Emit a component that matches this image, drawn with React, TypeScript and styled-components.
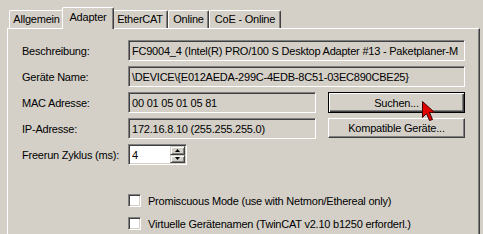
import React from "react";
import styled, { createGlobalStyle } from "styled-components";

const GlobalStyle = createGlobalStyle`
  html, body { margin: 0; padding: 0; background: #d4d0c8; }
  body {
    font-family: "Liberation Sans", Arial, sans-serif;
    font-size: 11px;
    letter-spacing: -0.22px;
    color: #000;
  }
`;

const Window = styled.div`
  position: relative;
  width: 483px;
  height: 234px;
  overflow: hidden;
  background: #d4d0c8;
`;

const TabStrip = styled.div`
  display: flex;
  align-items: flex-end;
  height: 28px;
  padding-left: 9px;
  box-sizing: border-box;
`;

const Tab = styled.div<{ $w: number; $active?: boolean }>`
  position: relative;
  box-sizing: border-box;
  width: ${(p) => p.$w + (p.$active ? 4 : 0)}px;
  height: ${(p) => (p.$active ? 22 : 18)}px;
  margin: 0 ${(p) => (p.$active ? -2 : 0)}px ${(p) => (p.$active ? -1 : 0)}px;
  padding-bottom: ${(p) => (p.$active ? 4 : 1)}px;
  z-index: ${(p) => (p.$active ? 2 : 1)};
  display: flex;
  align-items: center;
  justify-content: center;
  background: #d4d0c8;
  border-top: 1px solid #fff;
  border-left: 1px solid #fff;
  border-right: 1px solid #404040;
  border-top-left-radius: 2px;
  border-top-right-radius: 2px;
  box-shadow: inset -1px 0 0 #808080;
  white-space: nowrap;
`;

const Panel = styled.div`
  box-sizing: border-box;
  margin-left: 7px;
  width: 473px;
  height: 220px;
  border-top: 1px solid #fff;
  border-left: 1px solid #fff;
  border-right: 1px solid #404040;
  box-shadow: inset -1px 0 0 #808080;
  padding: 11px 0 0 14px;
`;

const Grid = styled.div`
  display: grid;
  grid-template-columns: 106px 188px 12px 137px;
  grid-auto-rows: 21px;
  row-gap: 5px;
  align-items: center;
`;

const Label = styled.div`
  grid-column: 1;
  white-space: nowrap;
`;

const Field = styled.div<{ $wide?: boolean; $white?: boolean }>`
  grid-column: ${(p) => (p.$wide ? "2 / 5" : "2")};
  box-sizing: border-box;
  height: 21px;
  display: flex;
  align-items: center;
  padding-left: 3px;
  overflow: hidden;
  white-space: nowrap;
  background: ${(p) => (p.$white ? "#fff" : "#d4d0c8")};
  border-top: 1px solid #808080;
  border-left: 1px solid #808080;
  border-bottom: 1px solid #fff;
  border-right: 1px solid #fff;
  box-shadow: inset 1px 1px 0 #404040, inset -1px -1px 0 #d4d0c8;
`;

const Button = styled.div<{ $default?: boolean }>`
  grid-column: 4;
  box-sizing: border-box;
  height: ${(p) => (p.$default ? 21 : 20)}px;
  align-self: start;
  display: flex;
  align-items: center;
  justify-content: center;
  background: #d4d0c8;
  border: 1px solid;
  border-color: ${(p) => (p.$default ? "#000" : "#fff #404040 #404040 #fff")};
  box-shadow: ${(p) =>
    p.$default
      ? "inset 1px 1px 0 #fff, inset -1px -1px 0 #404040, inset -2px -2px 0 #808080"
      : "inset -1px -1px 0 #808080"};
  white-space: nowrap;
`;

const SpinField = styled.div`
  grid-column: 2;
  box-sizing: border-box;
  width: 59px;
  height: 21px;
  display: flex;
  align-items: center;
  justify-content: space-between;
  padding: 0 1px 0 3px;
  background: #fff;
  border-top: 1px solid #808080;
  border-left: 1px solid #808080;
  border-bottom: 1px solid #fff;
  border-right: 1px solid #fff;
  box-shadow: inset 1px 1px 0 #404040, inset -1px -1px 0 #d4d0c8;
`;

const SpinButtons = styled.div`
  display: flex;
  flex-direction: column;
  width: 15px;
  height: 17px;
`;

const SpinButton = styled.div`
  flex: 1;
  box-sizing: border-box;
  display: flex;
  align-items: center;
  justify-content: center;
  background: #d4d0c8;
  border: 1px solid;
  border-color: #d4d0c8 #404040 #404040 #d4d0c8;
  box-shadow: inset 1px 1px 0 #fff, inset -1px -1px 0 #808080;
`;

const Options = styled.div`
  display: flex;
  flex-direction: column;
  gap: 10px;
  margin: 29px 0 0 106px;
`;

const OptionRow = styled.label`
  display: flex;
  align-items: center;
  gap: 7px;
  height: 13px;
  white-space: nowrap;
`;

const CheckBox = styled.span`
  box-sizing: border-box;
  width: 13px;
  height: 13px;
  background: #fff;
  border-top: 1px solid #808080;
  border-left: 1px solid #808080;
  border-bottom: 1px solid #fff;
  border-right: 1px solid #fff;
  box-shadow: inset 1px 1px 0 #404040, inset -1px -1px 0 #d4d0c8;
`;

const Cursor = styled.svg`
  position: absolute;
  left: 422px;
  top: 101px;
  pointer-events: none;
`;

const Arrow = ({ up }: { up?: boolean }) => (
  <svg width="5" height="3" viewBox="0 0 5 3">
    <path d={up ? "M2.5 0 L5 3 L0 3 Z" : "M0 0 L5 0 L2.5 3 Z"} fill="#000" />
  </svg>
);

export default function App() {
  return (
    <Window>
      <GlobalStyle />
      <TabStrip>
        <Tab $w={55}>Allgemein</Tab>
        <Tab $w={48} $active>Adapter</Tab>
        <Tab $w={56}>EtherCAT</Tab>
        <Tab $w={41}>Online</Tab>
        <Tab $w={72}>CoE - Online</Tab>
      </TabStrip>
      <Panel>
        <Grid>
          <Label>Beschreibung:</Label>
          <Field $wide>FC9004_4 (Intel(R) PRO/100 S Desktop Adapter #13 - Paketplaner-M</Field>
          <Label>Geräte Name:</Label>
          <Field $wide>\DEVICE\{"{"}E012AEDA-299C-4EDB-8C51-03EC890CBE25{"}"}</Field>
          <Label>MAC Adresse:</Label>
          <Field>00 01 05 01 05 81</Field>
          <Button $default>Suchen...</Button>
          <Label>IP-Adresse:</Label>
          <Field>172.16.8.10 (255.255.255.0)</Field>
          <Button>Kompatible Geräte...</Button>
          <Label>Freerun Zyklus (ms):</Label>
          <SpinField>
            <span>4</span>
            <SpinButtons>
              <SpinButton>
                <Arrow up />
              </SpinButton>
              <SpinButton>
                <Arrow />
              </SpinButton>
            </SpinButtons>
          </SpinField>
        </Grid>
        <Options>
          <OptionRow>
            <CheckBox />
            Promiscuous Mode (use with Netmon/Ethereal only)
          </OptionRow>
          <OptionRow>
            <CheckBox />
            Virtuelle Gerätenamen (TwinCAT v2.10 b1250 erforderl.)
          </OptionRow>
        </Options>
      </Panel>
      <Cursor width="13" height="22" viewBox="0 0 13 22">
        <path
          d="M0.5 0.5 L0.5 16.5 L4.5 12.5 L7.5 19.5 L10.5 18.5 L7.5 11.5 L12.5 11.5 Z"
          fill="#e00000"
          stroke="#400000"
          strokeWidth="1"
          strokeLinejoin="miter"
        />
      </Cursor>
    </Window>
  );
}
